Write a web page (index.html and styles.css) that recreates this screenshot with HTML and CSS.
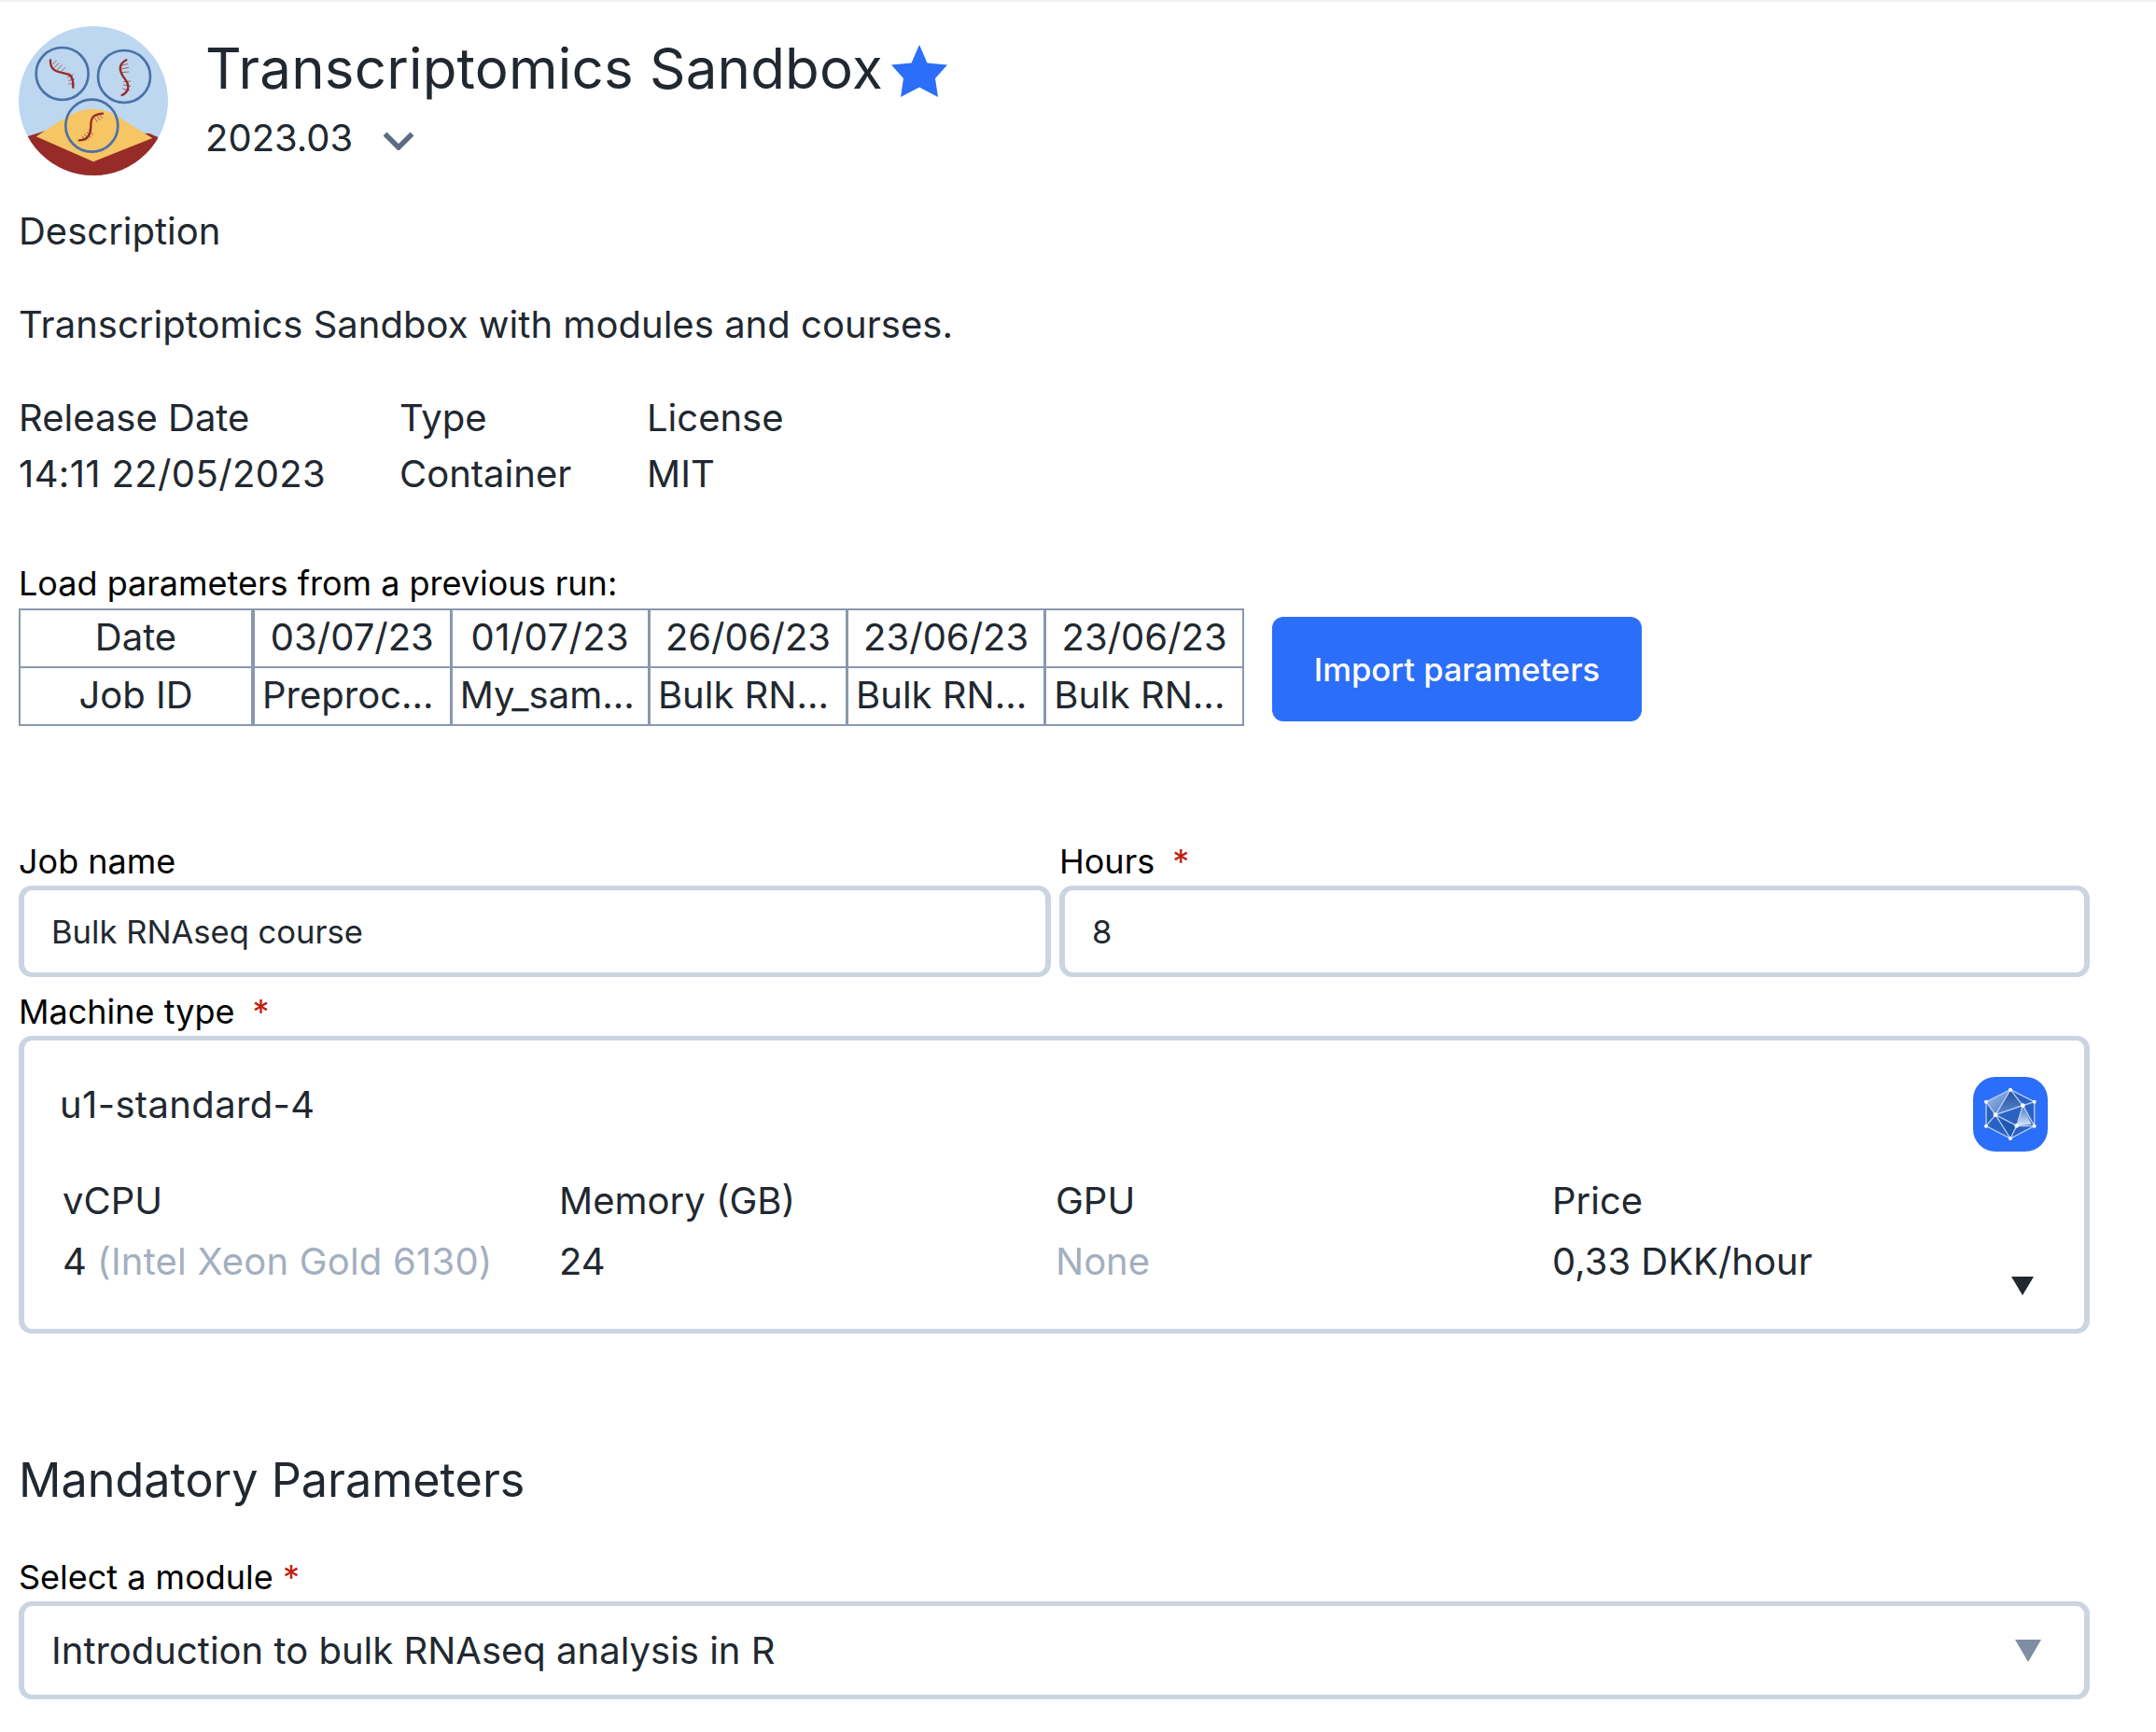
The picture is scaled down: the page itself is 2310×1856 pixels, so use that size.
FILE: index.html
```html
<!DOCTYPE html>
<html lang="en">

<head>
    <meta charset="UTF-8" />
    <meta name="viewport" content="width=device-width, initial-scale=1.0" />
    <title>Transcriptomics Sandbox</title>
    <link rel="stylesheet" href="styles.css">
</head>

<body>
    <div class="top-shade"></div>

    <div class="page">
        <div class="app-header">
            <svg class="app-logo" viewBox="30 25 480 480">
                <defs>
                    <clipPath id="logo-clip"><circle cx="270" cy="265" r="240" /></clipPath>
                </defs>
                <g clip-path="url(#logo-clip)">
                    <rect x="30" y="25" width="480" height="480" fill="#bcd7ef" />
                    <path d="M30 390 L62 378 L120 360 L450 370 L478 382 L510 505 L30 505 Z" fill="#962b28" />
                    <path d="M86 380 L180 320 Q270 262 355 320 L460 385 L270 461 Z" fill="#f6c564" />
                </g>
                <g fill="none" stroke="#a5625c" stroke-width="3">
                    <path d="M138 148 L152 136 M144 158 L160 144 M153 166 L170 150 M166 172 L180 158 M186 190 L206 180 M190 200 L210 196 M190 210 L210 212" />
                    <path d="M360 152 L382 146 M358 163 L384 158 M360 174 L384 172 M366 204 L390 202 M366 214 L390 218 M364 226 L388 232" />
                    <path d="M272 318 L284 334 M281 312 L292 328 M290 310 L300 322 M234 378 L244 394 M242 372 L254 390 M249 365 L262 384 M255 356 L270 376" />
                </g>
                <g fill="none" stroke="#962b28" stroke-width="7" stroke-linecap="round">
                    <path d="M132 134 C130 175 165 172 190 180 C205 187 205 205 205 222" />
                    <path d="M376 134 C345 150 355 175 375 200 C390 222 378 240 362 247" />
                    <path d="M300 306 C265 308 262 325 262 345 C262 375 250 392 224 392" />
                </g>
                <g fill="none" stroke="#4a71a8" stroke-width="8">
                    <circle cx="170" cy="178" r="84" />
                    <circle cx="369" cy="187" r="84" />
                    <circle cx="265" cy="345" r="84" />
                </g>
            </svg>
            <div class="app-info">
                <div class="app-title">
                    <span>Transcriptomics Sandbox</span>
                    <svg class="star" viewBox="0 0 60 56">
                        <path d="M30 0 L38.5 19.5 L60 21.5 L47 36 L50 56 L30 45.5 L10 56 L13 36 L0 21.5 L21.5 19.5 Z" fill="#2b6ef9" />
                    </svg>
                </div>
                <div class="app-version">
                    <span>2023.03</span>
                    <svg class="chevron" viewBox="0 0 34 20">
                        <path d="M2.5 2.5 L17 17 L31.5 2.5" fill="none" stroke="#5e6b85" stroke-width="5.5" />
                    </svg>
                </div>
            </div>
        </div>

        <div class="section-title">Description</div>
        <p class="description">Transcriptomics Sandbox with modules and courses.</p>

        <div class="meta">
            <div class="meta-date">
                <div>Release Date</div>
                <div class="wide-ones">14:11 22/05/2023</div>
            </div>
            <div class="meta-type">
                <div>Type</div>
                <div>Container</div>
            </div>
            <div>
                <div>License</div>
                <div>MIT</div>
            </div>
        </div>

        <div class="load-label">Load parameters from a previous run:</div>
        <div class="load-row">
            <table class="runs">
                <tr>
                    <th>Date</th>
                    <td class="date">03/07/23</td>
                    <td class="date wide-ones">01/07/23</td>
                    <td class="date">26/06/23</td>
                    <td class="date">23/06/23</td>
                    <td class="date">23/06/23</td>
                </tr>
                <tr>
                    <th>Job ID</th>
                    <td>Preproc...</td>
                    <td>My_sam...</td>
                    <td>Bulk RN...</td>
                    <td>Bulk RN...</td>
                    <td>Bulk RN...</td>
                </tr>
            </table>
            <button class="import-btn">Import parameters</button>
        </div>

        <div class="job-fields">
            <div>
                <label class="field-label">Job name</label>
                <input class="text-input" type="text" value="Bulk RNAseq course" />
            </div>
            <div>
                <label class="field-label">Hours <span class="req req-spaced">*</span></label>
                <input class="text-input" type="text" value="8" />
            </div>
        </div>

        <label class="field-label">Machine type <span class="req req-spaced">*</span></label>
        <div class="machine">
            <div class="machine-top">
                <div class="machine-name wide-ones">u1-standard-4</div>
                <svg class="machine-icon" viewBox="72 42 240 240">
                    <defs>
                        <linearGradient id="gem-a" x1="0" y1="0" x2="1" y2="1">
                            <stop offset="0" stop-color="#a9c4ee" />
                            <stop offset="1" stop-color="#3d70bb" />
                        </linearGradient>
                        <linearGradient id="gem-b" x1="0" y1="0" x2="0" y2="1">
                            <stop offset="0" stop-color="#1f4e9a" />
                            <stop offset="1" stop-color="#5b8ad0" />
                        </linearGradient>
                        <linearGradient id="gem-c" x1="0" y1="0" x2="0" y2="1">
                            <stop offset="0" stop-color="#3f76c8" />
                            <stop offset="1" stop-color="#dbe7f8" />
                        </linearGradient>
                    </defs>
                    <rect x="72" y="42" width="240" height="240" rx="72" fill="#2b6ef9" />
                    <path d="M192 83 L269 122 L269 200 L192 240 L114 200 L114 122 Z" fill="#2a62c4" />
                    <path d="M192 83 L114 122 L144 164 Z" fill="url(#gem-a)" />
                    <path d="M192 83 L232 134 L144 164 Z" fill="url(#gem-b)" />
                    <path d="M232 134 L212 199 L260 195 Z" fill="url(#gem-c)" />
                    <path d="M144 164 L212 199 L192 240 Z" fill="#1f5ab0" />
                    <g fill="none" stroke="#b9cff5" stroke-width="4">
                        <path d="M192 83 L269 122 L269 200 L192 240 L114 200 L114 122 Z" />
                        <path d="M114 122 L144 164 L192 83 L232 134 L269 122 M144 164 L232 134 L212 199 L144 164 M114 200 L144 164 L192 240 L212 199 L269 200 L232 134" />
                    </g>
                    <g fill="#fff">
                        <circle cx="192" cy="83" r="6" />
                        <circle cx="269" cy="122" r="6" />
                        <circle cx="269" cy="200" r="6" />
                        <circle cx="192" cy="240" r="6" />
                        <circle cx="114" cy="200" r="6" />
                        <circle cx="114" cy="122" r="6" />
                        <circle cx="144" cy="164" r="7" />
                        <circle cx="232" cy="134" r="7" />
                        <circle cx="212" cy="199" r="7" />
                    </g>
                </svg>
            </div>
            <div class="machine-specs">
                <div>
                    <div>vCPU</div>
                    <div class="spec-value">4 <span class="muted cpu-model">(Intel Xeon Gold 6130)</span></div>
                </div>
                <div>
                    <div>Memory (GB)</div>
                    <div class="spec-value">24</div>
                </div>
                <div>
                    <div>GPU</div>
                    <div class="spec-value muted">None</div>
                </div>
                <div>
                    <div>Price</div>
                    <div class="spec-value">0,33 DKK/hour</div>
                </div>
            </div>
            <svg class="machine-arrow" viewBox="0 0 24 20">
                <path d="M0 0 H24 L12 20 Z" fill="#212830" />
            </svg>
        </div>

        <h2 class="params-title">Mandatory Parameters</h2>

        <label class="field-label">Select a module <span class="req">*</span></label>
        <div class="select-box">
            <span>Introduction to bulk RNAseq analysis in R</span>
            <svg class="select-arrow" viewBox="0 0 28 24">
                <path d="M0 0 H28 L14 24 Z" fill="#808ea3" />
            </svg>
        </div>
    </div>
</body>

</html>
```

FILE: styles.css
```css
body {
    margin: 0;
    font-family: Inter, "Liberation Sans", sans-serif;
    background: #fff;
    color: #212830;
    font-size: 40px;
    line-height: 60px;
}

.top-shade {
    height: 4px;
    background: linear-gradient(#eceef0, #fff);
}

.page {
    padding: 24px 71px 34px 20px;
}

.app-header {
    display: flex;
    gap: 40px;
    height: 160px;
}

.app-logo {
    width: 160px;
    height: 160px;
}

.app-info {
    padding-top: 1px;
}

.app-title {
    display: flex;
    align-items: center;
    gap: 9px;
    font-size: 60px;
    letter-spacing: 0.2px;
    line-height: 88px;
}

.star {
    width: 60px;
    height: 56px;
    margin-top: 6px;
}

.app-version {
    display: flex;
    align-items: center;
    gap: 32px;
    margin-top: 1px;
    font-size: 40px;
}

.chevron {
    width: 34px;
    height: 20px;
    margin-top: 6px;
}

.section-title {
    margin-top: 30px;
}

.description {
    margin: 40px 0 0;
    letter-spacing: 0.03px;
}

.wide-ones {
    letter-spacing: 0.36px;
}

.meta {
    display: flex;
    margin-top: 40px;
}

.meta-date {
    width: 408px;
}

.meta-type {
    width: 265px;
}

.load-label {
    margin-top: 62px;
    font-size: 36px;
    line-height: 50px;
    color: #000;
}

.load-row {
    display: flex;
    align-items: flex-start;
    gap: 30px;
    margin-top: 2px;
}

.runs {
    border-collapse: collapse;
    table-layout: fixed;
    width: 1313px;
}

.runs th,
.runs td {
    border: 2px solid #8a98ae;
    border-left-width: 3px;
    border-right-width: 3px;
    height: 62px;
    padding: 0 8px 2px;
    box-sizing: border-box;
    font-size: 40px;
    font-weight: normal;
    line-height: 58px;
    white-space: nowrap;
}

.runs th {
    width: 250px;
    border-left-width: 2px;
    border-right-width: 4px;
    text-align: center;
}

.runs td:last-child {
    border-right-width: 2px;
}

.runs .date {
    text-align: center;
}

.import-btn {
    width: 396px;
    height: 112px;
    margin-top: 9px;
    border: none;
    border-radius: 12px;
    background-color: #2b6ef9;
    color: #fff;
    font-family: inherit;
    font-size: 34.6px;
    font-weight: 500;
    cursor: pointer;
}

.job-fields {
    display: grid;
    grid-template-columns: 1106px 1fr;
    gap: 9px;
    margin-top: 125px;
}

.field-label {
    display: block;
    font-size: 36px;
    line-height: 40px;
    margin-bottom: 6px;
    color: #000;
}

.req {
    color: #c0200f;
}

.req-spaced {
    margin-left: 9px;
}

.text-input {
    display: block;
    width: 100%;
    height: 98px;
    margin-bottom: 17px;
    padding: 0 29px;
    box-sizing: border-box;
    border: solid #cbd4e1;
    border-width: 5px 6px;
    border-radius: 14px;
    font-family: inherit;
    font-size: 34.6px;
    color: #212830;
}

.machine {
    position: relative;
    height: 319px;
    padding: 39px 39px 0 38px;
    box-sizing: border-box;
    border: solid #cbd4e1;
    border-width: 5px 6px;
    border-radius: 14px;
}

.machine-top {
    display: flex;
    justify-content: space-between;
    align-items: flex-start;
}

.machine-icon {
    width: 80px;
    height: 80px;
}

.machine-specs {
    display: grid;
    grid-template-columns: repeat(4, 532px);
    margin: 23px 0 0 3px;
}

.spec-value {
    margin-top: 5px;
}

.muted {
    color: #a3afc0;
}

.cpu-model {
    letter-spacing: 0.2px;
}

.machine-arrow {
    position: absolute;
    right: 54px;
    bottom: 36px;
    width: 24px;
    height: 20px;
}

.params-title {
    margin: 122px 0 0;
    font-size: 50.3px;
    font-weight: normal;
    line-height: 70px;
}

.params-title + .field-label {
    margin-top: 49px;
}

.select-box {
    display: flex;
    justify-content: space-between;
    align-items: center;
    height: 105px;
    padding: 0 46px 0 29px;
    box-sizing: border-box;
    border: solid #cbd4e1;
    border-width: 5px 6px;
    border-radius: 14px;
}

.select-arrow {
    width: 28px;
    height: 24px;
}
```
